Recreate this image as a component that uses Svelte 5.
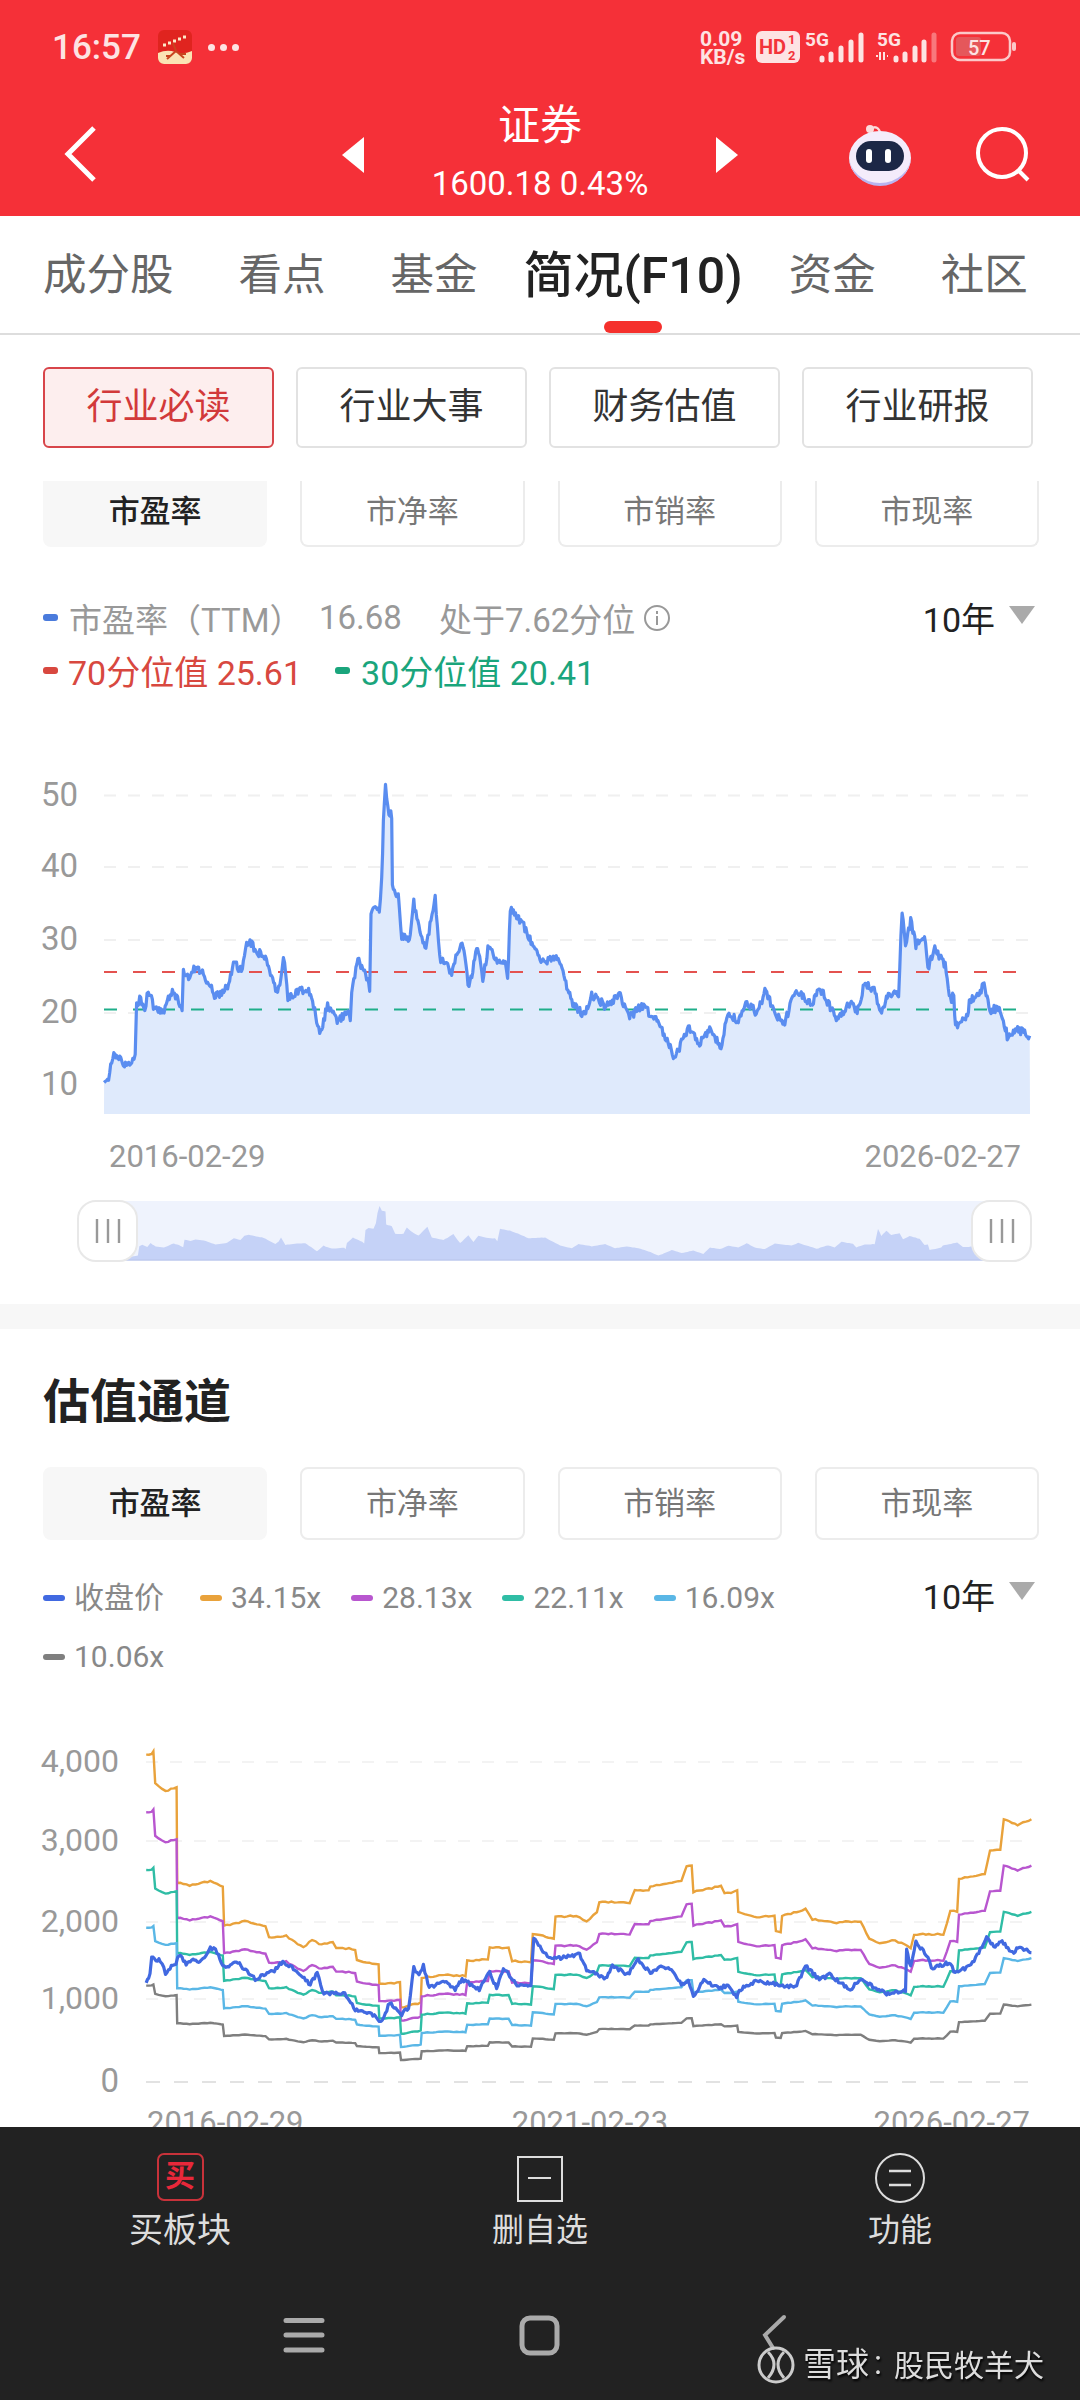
<script>
  const tabs = ["成分股", "看点", "基金", "简况(F10)", "资金", "社区"];
  const topChips = ["行业必读", "行业大事", "财务估值", "行业研报"];
  const ratioChips = ["市盈率", "市净率", "市销率", "市现率"];
  const bands = [
    { m: 34.15, color: "#e9a23b" },
    { m: 28.13, color: "#b856cf" },
    { m: 22.11, color: "#2fbda5" },
    { m: 16.09, color: "#5ab7e6" },
    { m: 10.06, color: "#7f7f7f" }
  ];

  // seeded so the noisy lines come out the same every run
  function rng(seed) {
    let s = seed;
    return () => {
      s = (s + 0x6d2b79f5) | 0;
      let t = Math.imul(s ^ (s >>> 15), 1 | s);
      t = (t + Math.imul(t ^ (t >>> 7), 61 | t)) ^ t;
      return ((t ^ (t >>> 14)) >>> 0) / 4294967296;
    };
  }

  function walk(points, step, amp, seed) {
    const r = rng(seed);
    const out = [];
    for (let i = 0; i < points.length - 1; i++) {
      const [x0, y0] = points[i];
      const [x1, y1] = points[i + 1];
      const n = Math.max(1, Math.round((x1 - x0) / step));
      for (let k = 0; k < n; k++) {
        const t = k / n;
        out.push([x0 + (x1 - x0) * t, y0 + (y1 - y0) * t + (r() - 0.5) * amp * 2]);
      }
    }
    out.push(points[points.length - 1]);
    return out;
  }

  const toPath = (pts) => "M" + pts.map((p) => p[0].toFixed(1) + " " + p[1].toFixed(1)).join("L");

  // ---- PE chart, points read off the reference
  const peLeft = [[302,990],[315,975],[330,905],[350,925],[358,945],[385,925],[392,915],[396,770],[405,745],[420,780],[430,720],[445,770],[470,790],[500,725],[515,750],[528,785],[532,665],[550,685],[565,660],[590,675],[625,740],[660,715],[680,640],[700,670],[712,600],[725,585],[770,635],[805,730],[815,690],[822,625],[835,745],[870,725],[895,720],[930,850],[950,760],[975,810],[1012,790],[1016,820],[1020,720],[1038,630],[1060,680],[1072,720],[1076,510],[1085,475],[1100,490],[1107,400],[1112,240],[1118,125],[1125,200],[1136,215],[1138,420],[1155,450],[1165,570],[1190,570],[1200,470],[1215,540],[1235,600],[1262,455],[1275,630],[1310,670],[1340,575],[1360,720],[1385,595],[1400,700],[1415,600],[1445,640],[1465,640],[1472,690],[1480,490],[1510,520],[1540,580]];
  const peRight = [[0,640],[50,630],[75,700],[95,760],[130,800],[150,735],[170,750],[190,770],[230,735],[260,800],[295,770],[330,800],[360,850],[390,920],[430,830],[460,880],[495,835],[525,890],[545,790],[575,815],[600,760],[630,790],[655,720],[680,790],[710,815],[740,725],[790,760],[810,715],[865,810],[900,755],[920,790],[940,700],[975,730],[985,790],[1010,740],[1040,735],[1050,495],[1060,600],[1075,520],[1090,590],[1115,560],[1125,660],[1145,605],[1175,650],[1190,750],[1200,740],[1205,830],[1240,790],[1245,760],[1288,710],[1305,780],[1335,775],[1355,855],[1385,835],[1420,855]];
  const peKeys = [
    ...peLeft.map(([x, y]) => [x / 2.9, y / 2.9 + 740]),
    ...peRight.map(([x, y]) => [x / 2.9 + 540, y / 2.9 + 740])
  ];
  const pePts = walk(peKeys, 1, 4.2, 11);
  const peLine = toPath(pePts);
  const peArea = peLine + "L1030 1113L104 1113Z";
  const miniPts = walk(peKeys, 2, 1, 3).map(([x, y]) => [7.5 + x * 0.965, 1259 - ((1081 - y) / 298) * 54]);
  const miniArea = toPath(miniPts) + `L${miniPts[miniPts.length - 1][0]} 1259L${miniPts[0][0]} 1259Z`;

  // ---- valuation channel, top band read off the reference, the others scale from it
  const chanLeft = [[424,160],[440,160],[445,150],[450,248],[480,270],[512,258],[514,545],[550,553],[610,541],[640,555],[646,555],[650,675],[710,660],[770,675],[780,710],[830,705],[880,740],[905,715],[925,730],[965,725],[975,740],[1030,745],[1035,778],[1098,790],[1100,850],[1160,845],[1163,920],[1220,905],[1223,830],[1290,822],[1350,825],[1355,780],[1415,775],[1420,740],[1475,740],[1485,780],[1540,785],[1545,700]];
  const chanRight = [[0,700],[40,715],[45,648],[105,645],[135,660],[165,635],[172,603],[260,605],[275,567],[315,570],[320,557],[410,540],[425,495],[440,495],[445,573],[525,555],[535,578],[572,570],[575,632],[620,648],[680,645],[684,692],[698,692],[702,645],[770,625],[790,655],[860,665],[930,660],[955,715],[985,727],[1030,718],[1075,740],[1085,700],[1170,700],[1190,630],[1210,632],[1215,533],[1290,520],[1305,450],[1335,445],[1345,355],[1385,372],[1425,355]];
  const zero = 2081;
  const chanKeys = [
    ...chanLeft.map(([x, y]) => [x / 2.9, y / 3 + 1700]),
    ...chanRight.map(([x, y]) => [x / 2.9 + 540, y / 3 + 1700])
  ];
  const chanPts = walk(chanKeys, 3, 0.7, 5);
  const bandPaths = bands.map((b) => ({
    color: b.color,
    d: toPath(chanPts.map(([x, y]) => [x, zero - ((zero - y) * b.m) / 34.15]))
  }));

  const closeLeft = [[424,850],[435,820],[440,770],[465,780],[480,815],[510,785],[520,760],[540,790],[560,770],[580,785],[610,740],[625,745],[650,800],[690,785],[740,835],[800,805],[820,780],[860,810],[900,850],[920,815],[935,875],[1000,880],[1030,925],[1090,945],[1105,965],[1130,905],[1165,940],[1185,920],[1200,800],[1215,825],[1228,795],[1245,860],[1290,840],[1320,865],[1340,835],[1390,865],[1420,815],[1440,860],[1460,800],[1500,855],[1540,850],[1548,710]];
  const closeRight = [[0,740],[30,775],[60,770],[115,760],[135,805],[190,835],[210,795],[255,820],[285,775],[320,815],[355,795],[385,810],[410,850],[430,840],[445,885],[475,840],[520,860],[545,855],[570,885],[590,855],[630,840],[690,850],[740,860],[770,795],[810,835],[840,822],[900,865],[930,835],[1005,880],[1060,870],[1063,745],[1075,800],[1090,725],[1120,760],[1135,800],[1190,785],[1200,815],[1250,795],[1295,710],[1320,738],[1340,722],[1370,755],[1390,740],[1425,755]];
  const closePath = toPath(walk([
    ...closeLeft.map(([x, y]) => [x / 2.9, y / 3 + 1700]),
    ...closeRight.map(([x, y]) => [x / 2.9 + 540, y / 3 + 1700])
  ], 1.5, 1.8, 23));

  const peTicks = [["50", 794.5], ["40", 866], ["30", 939], ["20", 1012], ["10", 1084]];
  const chanTicks = [["4,000", 1761], ["3,000", 1840], ["2,000", 1921], ["1,000", 1998]];
</script>

<div class="page">
  <header class="head">
    <div class="status">
      <div class="status-left">
        <span class="time">16:57</span>
        <svg class="app-icon" viewBox="0 0 34 34" width="34" height="34">
          <rect width="34" height="34" rx="6" fill="#e0241f" />
          <path d="M0 23q9-4 17-1t17-1v7a6 6 0 0 1-6 6H6a6 6 0 0 1-6-6z" fill="#fbe3b4" />
          <path d="M5 15h3M10 13h3M15 11h3M20 9h3M25 7h3" stroke="#fde9c8" stroke-width="3" />
          <path d="M15 13l3 8-9 8M18 21l8 7M8 26h5M22 24h6" stroke="#c9441f" stroke-width="2" fill="none" />
        </svg>
        <span class="dots"><i></i><i></i><i></i></span>
      </div>
      <svg class="status-right" viewBox="697 0 320 94" width="320" height="94">
        <g fill="#fde3e3" font-weight="700">
          <text x="700" y="46" font-size="21">0.09</text>
          <text x="700" y="64" font-size="21">KB/s</text>
          <rect x="756" y="31" width="44" height="32" rx="6" />
          <text x="805" y="46" font-size="19">5G</text>
          <text x="877" y="46" font-size="19">5G</text>
        </g>
        <text x="759" y="54" font-size="20" font-weight="700" fill="#f3333a">HD</text>
        <text x="788" y="44" font-size="13" font-weight="700" fill="#f3333a">1</text>
        <text x="788" y="60" font-size="13" font-weight="700" fill="#f3333a">2</text>
        <g stroke="#fde3e3" stroke-width="5" stroke-linecap="round">
          <path d="M822 58v2M831 54v6M841 48v12M851 42v18M861 35v25" />
          <path d="M896 58v2M905 54v6M915 48v12M924 42v18" />
          <path d="M934 35v25" opacity=".4" />
        </g>
        <path d="M876 56h2M880 52v8M884 52v8M887 56h1" stroke="#fde3e3" stroke-width="2" fill="none" />
        <rect x="952" y="33" width="58" height="27" rx="8" fill="none" stroke="#fbc9c9" stroke-width="2.5" />
        <rect x="956" y="37" width="25" height="19" rx="3" fill="#e5575b" />
        <rect x="1012" y="42" width="4" height="9" rx="2" fill="#fbc9c9" />
        <text x="968" y="55" font-size="20" font-weight="500" fill="#fde3e3">57</text>
      </svg>
    </div>

    <div class="nav">
      <svg class="back" viewBox="0 0 40 60" width="40" height="60">
        <path d="M30 3L4 29l26 26" fill="none" stroke="#fff" stroke-width="5" />
      </svg>
      <div class="title-block">
        <svg viewBox="0 0 22 36" width="22" height="36"><path d="M22 0v36L0 18z" fill="#fff" /></svg>
        <div class="titles">
          <div class="title">证券</div>
          <div class="sub">1600.18 0.43%</div>
        </div>
        <svg viewBox="0 0 22 36" width="22" height="36"><path d="M0 0v36l22-18z" fill="#fff" /></svg>
      </div>
      <div class="nav-right">
        <svg viewBox="0 0 66 62" width="66" height="62">
          <path d="M24 9c-2-7 8-8 9 0" fill="none" stroke="#fbdcdc" stroke-width="2.5" />
          <circle cx="23" cy="5" r="4" fill="#fbdcdc" />
          <ellipse cx="33" cy="34" rx="31" ry="27" fill="#f4ecfb" />
          <path d="M2 32a31 27 0 0 0 62 0 31 30 0 0 1-62 0z" fill="#b9b4f0" />
          <rect x="9" y="17" width="48" height="30" rx="15" fill="#1c2746" />
          <rect x="19" y="25" width="6" height="14" rx="3" fill="#fff" />
          <rect x="38" y="25" width="6" height="14" rx="3" fill="#fff" />
        </svg>
        <svg viewBox="0 0 60 60" width="60" height="60">
          <circle cx="28" cy="28" r="24" fill="none" stroke="#fff" stroke-width="4" />
          <path d="M44 45l10 10" stroke="#fff" stroke-width="4" />
        </svg>
      </div>
    </div>
  </header>

  <nav class="tabs">
    {#each tabs as tab, i}
      <div class="tab" class:active={i === 3}>{tab}</div>
    {/each}
  </nav>

  <main class="body">
    <div class="chips-top">
      {#each topChips as chip, i}
        <div class="chip" class:on={i === 0}>{chip}</div>
      {/each}
    </div>

    <div class="ratio clipped">
      {#each ratioChips as chip, i}
        <div class="rchip" class:on={i === 0}>{chip}</div>
      {/each}
    </div>

    <div class="legend-pe">
      <div class="pe-row">
        <i class="dash" style="background:#4a7bdc"></i>
        <span class="gray first">市盈率（TTM）</span>
        <span class="gray val">16.68</span>
        <span class="gray pct">处于7.62分位</span>
        <svg class="info" viewBox="0 0 28 28" width="28" height="28">
          <circle cx="14" cy="14" r="12" fill="none" stroke="#999" stroke-width="2" />
          <path d="M14 7v3M14 12v9" stroke="#999" stroke-width="2" />
        </svg>
        <span class="range">10年</span>
        <svg class="caret" viewBox="0 0 26 18" width="26" height="18"><path d="M0 0h26L13 18z" fill="#aaa" /></svg>
      </div>
      <div class="pe-row">
        <i class="dash" style="background:#d8483f"></i>
        <span class="red">70分位值 25.61</span>
        <i class="dash second" style="background:#1aa57c"></i>
        <span class="green">30分位值 20.41</span>
      </div>
    </div>

    <svg class="chart" viewBox="0 700 1080 603" width="1080" height="603">
      {#each peTicks as [label, y]}
        <text class="tick" x="78" y={y + 10} text-anchor="end">{label}</text>
        <path d="M104 {y}H1030" stroke="#f0f0f0" stroke-width="2" stroke-dasharray="12 12" />
      {/each}
      <path d={peArea} fill="#dfeafc" />
      <path d="M104 971H1030" stroke="#e4524f" stroke-width="2" stroke-dasharray="13 16" />
      <path d="M104 1008.6H1030" stroke="#1fae8a" stroke-width="2" stroke-dasharray="13 16" />
      <path d={peLine} fill="none" stroke="#5a8df0" stroke-width="3.2" stroke-linejoin="round" />
      <text class="date" x="109" y="1166">2016-02-29</text>
      <text class="date" x="1021" y="1166" text-anchor="end">2026-02-27</text>

      <rect x="100" y="1200" width="910" height="59" fill="#eff3fd" />
      <path d={miniArea} fill="#c5d2f7" />
      <path d="M100 1259H1010" stroke="#bcc8ee" stroke-width="1.5" />
      {#each [78, 972] as hx}
        <rect x={hx} y="1200" width="59" height="60" rx="18" fill="#fff" stroke="#e8e8e8" stroke-width="2" />
        <path d="M{hx + 19} 1218v24M{hx + 30} 1218v24M{hx + 41} 1218v24" stroke="#999" stroke-width="2.4" />
      {/each}
    </svg>

    <div class="band"></div>

    <h2 class="sec-title">估值通道</h2>

    <div class="ratio">
      {#each ratioChips as chip, i}
        <div class="rchip" class:on={i === 0}>{chip}</div>
      {/each}
    </div>

    <div class="legend-chan">
      <div class="chan-items">
        <span class="li close"><i class="dash wide" style="background:#4169e1"></i>收盘价</span>
        {#each bands as b}
          <span class="li"><i class="dash wide" style="background:{b.color}"></i>{b.m.toFixed(2)}x</span>
        {/each}
      </div>
      <span class="range">10年</span>
      <svg class="caret" viewBox="0 0 26 18" width="26" height="18"><path d="M0 0h26L13 18z" fill="#aaa" /></svg>
    </div>

    <svg class="chart" viewBox="0 1686 1080 460" width="1080" height="460">
      {#each chanTicks as [label, y]}
        <text class="tick narrow" x="119" y={y + 10} text-anchor="end">{label}</text>
        <path d="M146 {y}H1031" stroke="#f3f3f3" stroke-width="2" stroke-dasharray="12 12" />
      {/each}
      <text class="tick" x="119" y="2091" text-anchor="end">0</text>
      <path d="M146 2081H1031" stroke="#e2e2e2" stroke-width="2" stroke-dasharray="14 14" />
      {#each bandPaths as b}
        <path d={b.d} fill="none" stroke={b.color} stroke-width="2.4" />
      {/each}
      <path d={closePath} fill="none" stroke="#4169e1" stroke-width="3.2" stroke-linejoin="round" />
      <text class="date" x="147" y="2132">2016-02-29</text>
      <text class="date" x="590" y="2132" text-anchor="middle">2021-02-23</text>
      <text class="date" x="1030" y="2132" text-anchor="end">2026-02-27</text>
    </svg>
  </main>

  <footer class="foot">
    <div class="actions">
      <div class="action">
        <div class="buy-icon">买</div>
        <div class="label big">买板块</div>
      </div>
      <div class="action">
        <svg viewBox="0 0 46 50" width="46" height="50">
          <rect x="1" y="4" width="44" height="44" fill="none" stroke="#ddd" stroke-width="2" />
          <path d="M11 25h23" stroke="#ddd" stroke-width="2" />
        </svg>
        <div class="label">删自选</div>
      </div>
      <div class="action">
        <svg viewBox="0 0 50 50" width="50" height="50">
          <circle cx="25" cy="25" r="24" fill="none" stroke="#ddd" stroke-width="2" />
          <path d="M14 18h22M14 32h22" stroke="#ddd" stroke-width="2.5" />
        </svg>
        <div class="label">功能</div>
      </div>
    </div>
    <svg class="sysbar" viewBox="0 2252 1080 148" width="1080" height="148">
      <path d="M286 2320.5h36M286 2335h36M286 2350h36" stroke="#aaa" stroke-width="5" stroke-linecap="round" />
      <rect x="522" y="2318" width="35" height="35" rx="8" fill="none" stroke="#aaa" stroke-width="5" />
      <path d="M784 2317l-19 18 8 13" fill="none" stroke="#aaa" stroke-width="4" stroke-linecap="round" />
      <ellipse cx="776" cy="2365" rx="17" ry="17" fill="none" stroke="#ccc" stroke-width="3" />
      <path d="M768 2352q12 12 0 26M784 2352q-12 12 0 26" fill="none" stroke="#ccc" stroke-width="3" />
      <text class="mark" x="803" y="2376">雪球</text>
      <text class="mark" x="874" y="2374">:</text>
      <text class="mark small" x="894" y="2376">股民牧羊犬</text>
    </svg>
  </footer>
</div>

<style>
  :global(body) { margin: 0; background: #fff; }
  .page {
    width: 1080px;
    height: 2400px;
    display: flex;
    flex-direction: column;
    overflow: hidden;
    font-family: Roboto, "Noto Sans CJK SC", sans-serif;
    color: #222;
  }
  svg { display: block; flex: none; }
  svg text { font-family: Roboto, "Noto Sans CJK SC", sans-serif; }

  .head { background: #f53038; height: 216px; color: #fff; flex: none; }
  .status { height: 94px; display: flex; justify-content: space-between; align-items: center; padding: 0 63px 0 52px; }
  .status-left { display: flex; align-items: center; }
  .time { font-size: 35px; font-weight: 500; color: #fde3e3; width: 106px; }
  .dots { display: flex; gap: 5px; margin-left: 16px; }
  .dots i { width: 7px; height: 7px; border-radius: 50%; background: #fde3e3; }

  .nav { display: grid; grid-template-columns: 1fr auto 1fr; align-items: center; height: 122px; }
  .back { margin-left: 64px; }
  .title-block { display: flex; align-items: center; gap: 64px; }
  .titles { text-align: center; width: 224px; margin-top: -2px; }
  .title { font-size: 42px; line-height: 50px; padding-top: 8px; }
  .sub { font-size: 33px; line-height: 40px; margin-top: 13px; padding-bottom: 11px; white-space: nowrap; }
  .nav-right { display: flex; justify-content: flex-end; align-items: center; gap: 61px; padding-right: 46px; }

  .tabs { border-bottom: 2px solid #ddd; display: flex; gap: 65px; padding: 30px 0 0 43px; flex: none; height: 87px; }
  .tab { font-size: 43.5px; line-height: 60px; color: #666; white-space: nowrap; position: relative; height: 60px; }
  .tab.active { font-size: 50px; font-weight: 500; color: #222; margin: 0 -19px; }
  .tab.active::after {
    content: "";
    position: absolute;
    left: calc(50% - 29px);
    top: 75px;
    width: 58px;
    height: 12px;
    border-radius: 6px;
    background: #f5302c;
  }

  .body { flex: 1; overflow: hidden; min-height: 0; }
  .chips-top { display: flex; gap: 22px; padding: 32px 46px 0 43px; }
  .chip {
    width: 231px;
    height: 81px;
    box-sizing: border-box;
    border: 2px solid #e2e2e2;
    border-radius: 6px;
    font-size: 36px;
    line-height: 77px;
    text-align: center;
    color: #333;
  }
  .chip.on { color: #d2393a; border-color: #d8454a; background: #fdeeee; }

  .ratio { display: flex; gap: 33px; padding: 0 41px 0 43px; }
  .ratio.clipped { margin-top: 33px; }
  .rchip {
    width: 225px;
    height: 73px;
    box-sizing: border-box;
    border: 2px solid #ececec;
    border-radius: 8px;
    font-size: 31px;
    line-height: 69px;
    text-align: center;
    color: #777;
  }
  .rchip.on { background: #f7f7f7; border-color: #f7f7f7; color: #222; font-weight: 500; }
  .clipped .rchip { height: 66px; border-top: none; border-radius: 0 0 8px 8px; line-height: 62px; }

  .dash { display: block; width: 15px; height: 7px; border-radius: 3px; flex: none; }
  .legend-pe { padding: 44px 45px 0 43px; height: 110px; }
  .pe-row { display: flex; align-items: center; height: 53px; font-size: 33px; white-space: nowrap; }
  .gray { color: #999; }
  .first { margin-left: 11px; width: 250px; }
  .val { width: 120px; }
  .pct { width: 194px; }
  .info { margin-left: 10px; }
  .range { font-size: 34px; color: #222; margin-left: auto; }
  .caret { margin-left: 14px; margin-top: -6px; }
  .red { color: #d8483f; margin-left: 10px; font-size: 34px; }
  .green { color: #1aa57c; margin-left: 11px; font-size: 34px; }
  .second { margin-left: 33px; }

  .tick { font-size: 33px; fill: #999; }
  .tick.narrow { font-size: 32px; }
  .date { font-size: 31px; fill: #999; }
  .mark { font-size: 33px; fill: #ddd; filter: drop-shadow(1px 2px 1px #000); }
  .mark.small { font-size: 30px; }

  .band { height: 25px; background: #f7f7f7; }
  .sec-title { margin: 0; padding: 41px 0 33px 43px; font-size: 47px; line-height: 64px; font-weight: 700; color: #222; }

  .legend-chan { display: flex; align-items: flex-start; padding: 28px 45px 0 43px; box-sizing: border-box; height: 147px; }
  .legend-chan .range { line-height: 59px; }
  .legend-chan .caret { margin-top: 14px; }
  .chan-items { display: flex; flex-wrap: wrap; column-gap: 30px; width: 770px; }
  .li { display: flex; align-items: center; gap: 9px; font-size: 30px; line-height: 59px; color: #888; }
  .li.close { margin-right: 6px; }
  .dash.wide { width: 22px; height: 6px; }

  .foot { height: 273px; background: #222; flex: none; }
  .actions { display: grid; grid-template-columns: repeat(3, 1fr); padding-top: 26px; height: 99px; }
  .action { display: flex; flex-direction: column; align-items: center; }
  .buy-icon {
    width: 47px;
    height: 48px;
    box-sizing: border-box;
    border: 2.5px solid #c8323a;
    border-radius: 7px;
    color: #e8283a;
    font-size: 30px;
    line-height: 42px;
    text-align: center;
    font-weight: 700;
    margin-bottom: 2px;
  }
  .label { font-size: 32px; line-height: 44px; margin-top: 5px; color: #ddd; white-space: nowrap; }
  .label.big { font-size: 34px; }
</style>
